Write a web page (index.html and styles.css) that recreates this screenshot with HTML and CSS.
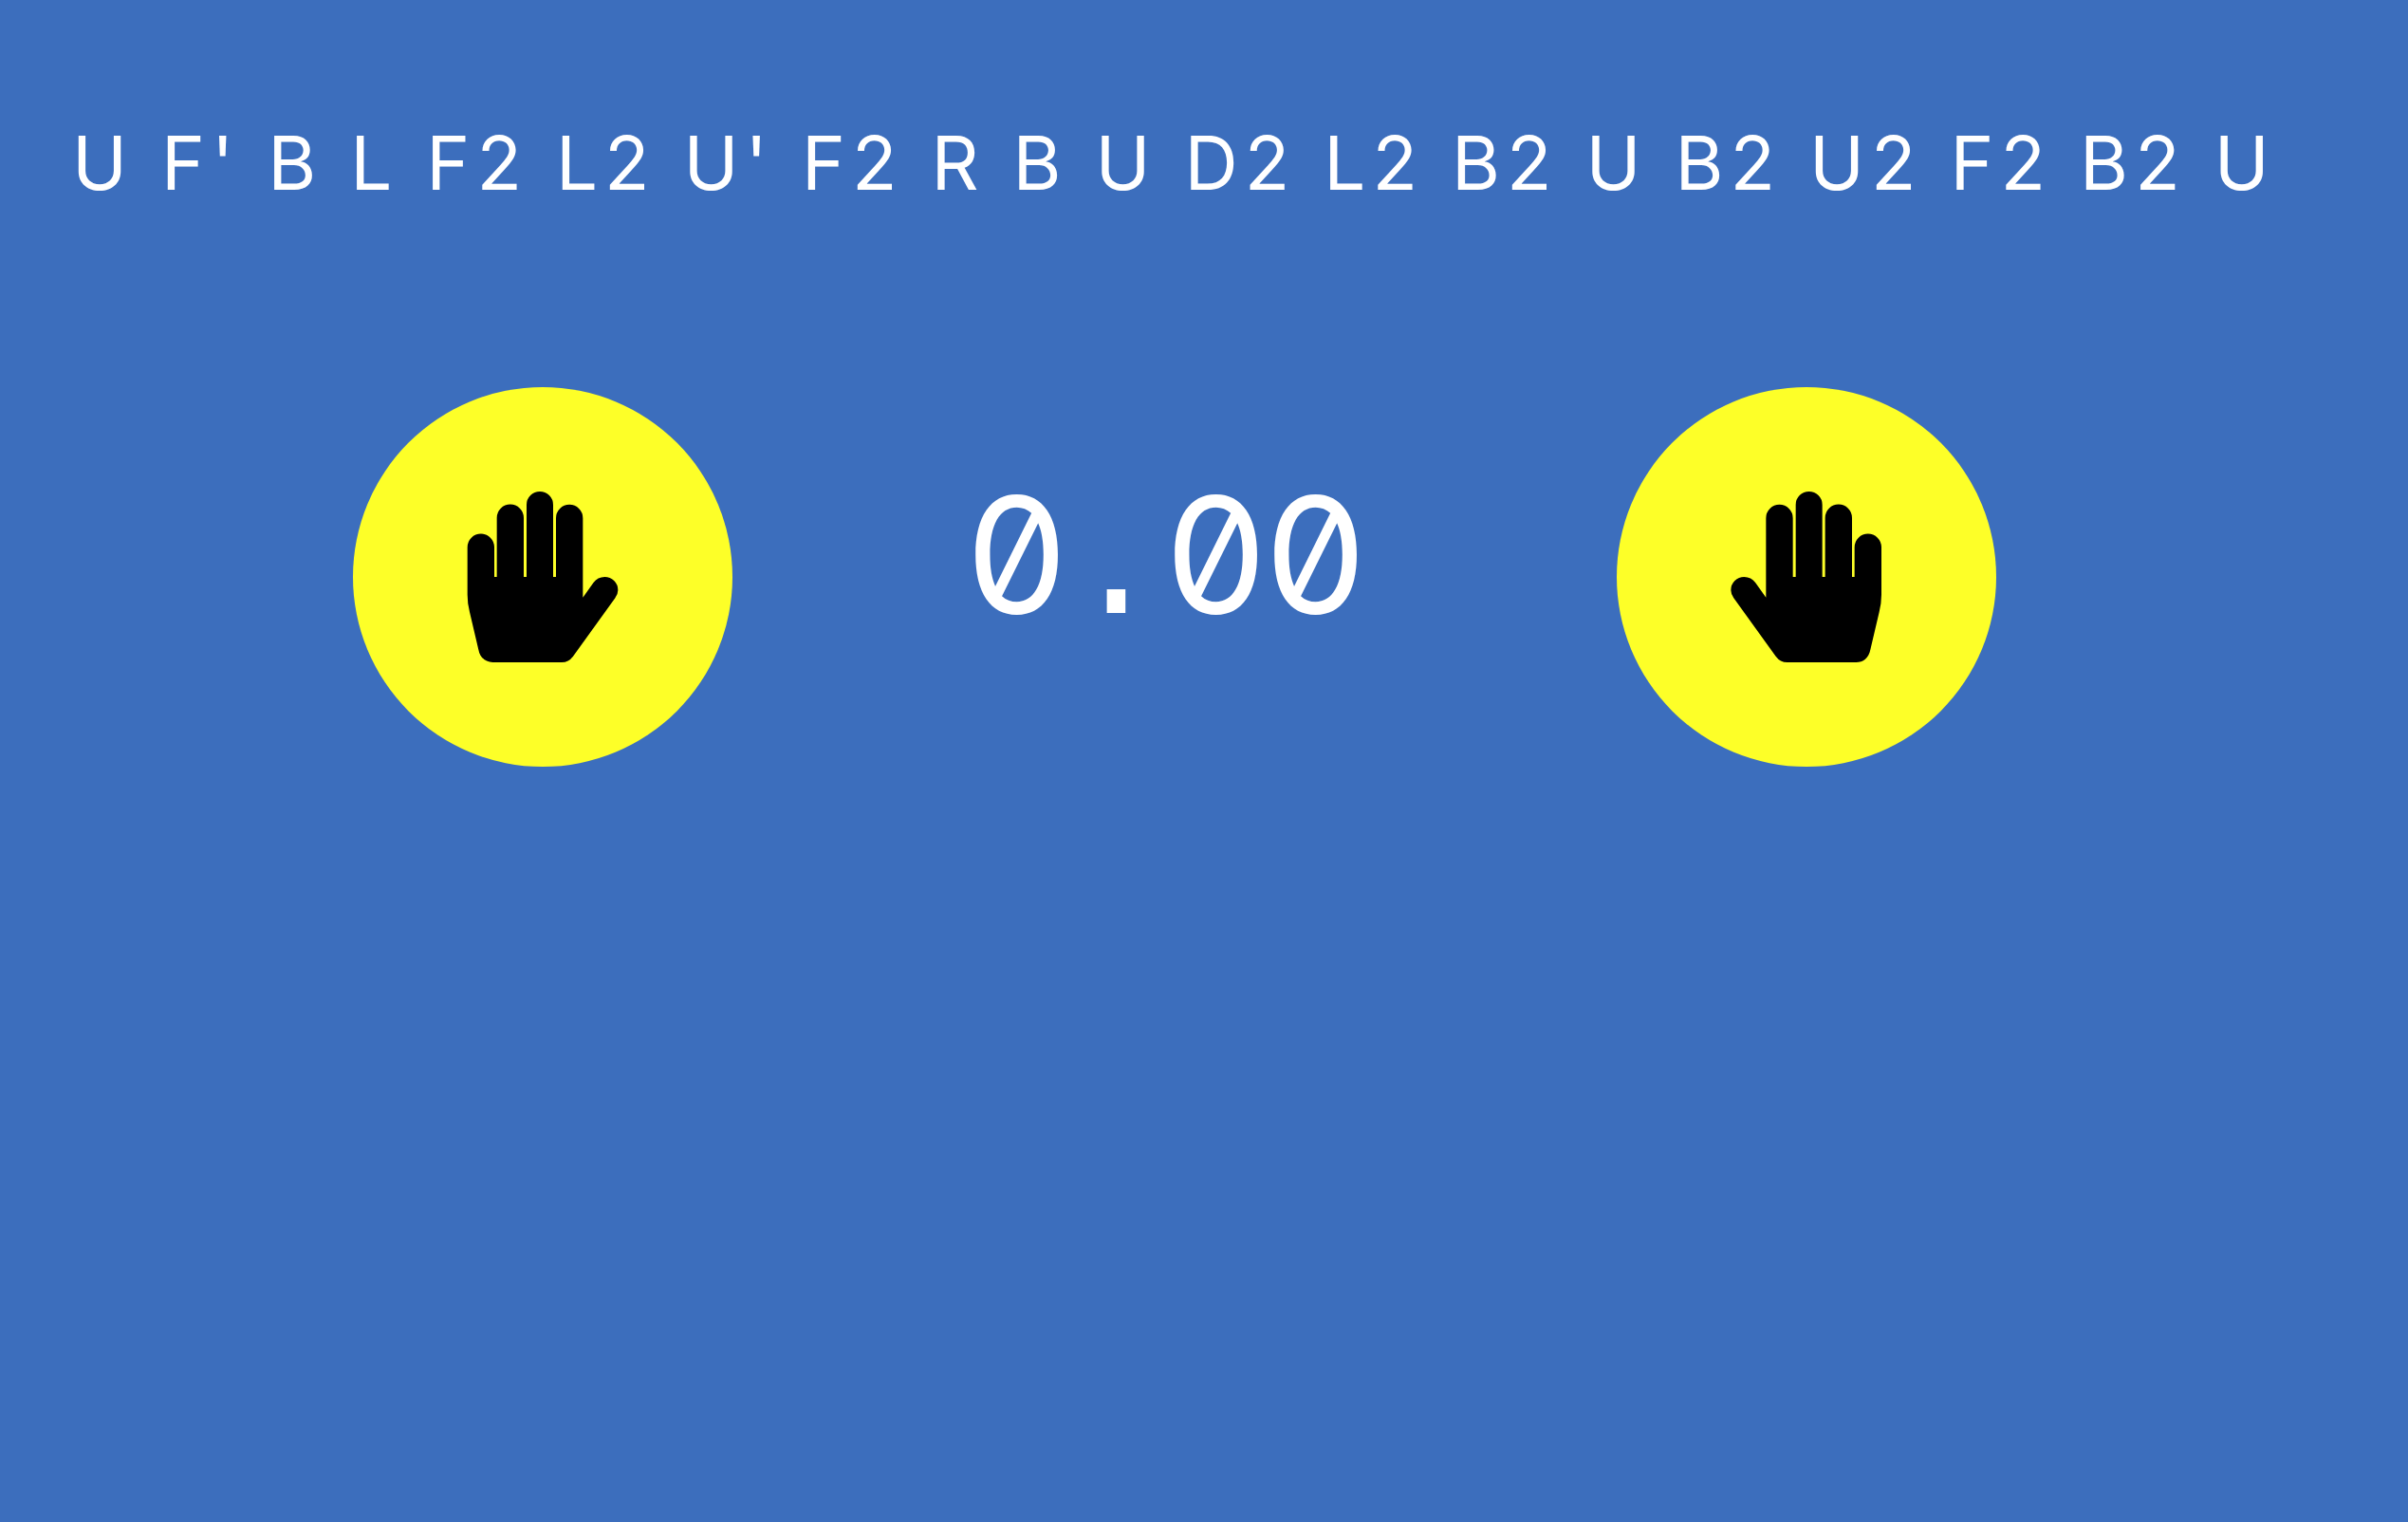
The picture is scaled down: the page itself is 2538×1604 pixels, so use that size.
FILE: index.html
```html
<!DOCTYPE html>
<html lang="en">
<head>
<meta charset="utf-8">
<meta name="viewport" content="width=device-width, initial-scale=1">
<title>Cube Timer</title>
<link rel="stylesheet" href="styles.css">
</head>
<body>
<main class="page">
  <p class="scramble">U F' B L F2 L2 U' F2 R B U D2 L2 B2 U B2 U2 F2 B2 U</p>
  <section class="timer">
    <button class="pad" type="button" aria-label="Left hand">
      <svg class="hand" viewBox="40 24 476 540" aria-hidden="true">
        <path d="M40 200A42.500 42.500 0 0 1 125 200V294H133V107A42.500 42.500 0 0 1 218 107V294H227V66A42 42 0 0 1 311 66V294H320V108A42.500 42.500 0 0 1 405 108V359L438 313Q452 294 474 294A42 42 0 0 1 516 336Q516 348 507 361L374 545Q360 564 338 564H120C98 564 80 550 75 524L47 405Q40 378 40 350Z"/>
      </svg>
    </button>
    <output class="time"><span class="digit">0</span><span class="digit point">.</span><span class="digit">0</span><span class="digit">0</span></output>
    <button class="pad" type="button" aria-label="Right hand">
      <svg class="hand" viewBox="0 24 476 540" aria-hidden="true">
        <path transform="translate(515 0) scale(-1 1)" d="M40 200A42.500 42.500 0 0 1 125 200V294H133V107A42.500 42.500 0 0 1 218 107V294H227V66A42 42 0 0 1 311 66V294H320V108A42.500 42.500 0 0 1 405 108V359L438 313Q452 294 474 294A42 42 0 0 1 516 336Q516 348 507 361L374 545Q360 564 338 564H120C98 564 80 550 75 524L47 405Q40 378 40 350Z"/>
      </svg>
    </button>
  </section>
</main>
</body>
</html>
```
FILE: styles.css
```css
* {
  box-sizing: border-box;
}

body {
  margin: 0;
  min-height: 100vh;
  background: #3c6ebd;
  color: #fff;
  font-family: Inter, "Liberation Sans", sans-serif;
}

.page {
  display: flex;
  flex-direction: column;
  gap: 186px;
  padding: 122px 62px 0 0;
}

.scramble {
  margin: 0;
  padding-left: 76px;
  font-size: 78px;
  line-height: 100px;
  letter-spacing: 7px;
}

.timer {
  display: flex;
  align-items: center;
  justify-content: space-between;
  width: 100%;
  max-width: 1732px;
  margin: 0 auto;
}

.pad {
  display: flex;
  flex: none;
  align-items: center;
  justify-content: center;
  width: 400px;
  height: 400px;
  padding: 0;
  border: 0;
  border-radius: 50%;
  background: #fdff28;
  color: #000;
  cursor: pointer;
}

.hand {
  width: 160px;
  height: 180px;
  overflow: visible;
  fill: currentColor;
}

.time {
  display: flex;
  align-items: baseline;
  padding: 0 18px 32px 0;
  font-size: 170px;
  line-height: 200px;
  font-feature-settings: "tnum", "zero";
}

.digit {
  display: flex;
  justify-content: center;
  width: 105px;
}

.point {
  font-family: "Liberation Mono", monospace;
}
```
